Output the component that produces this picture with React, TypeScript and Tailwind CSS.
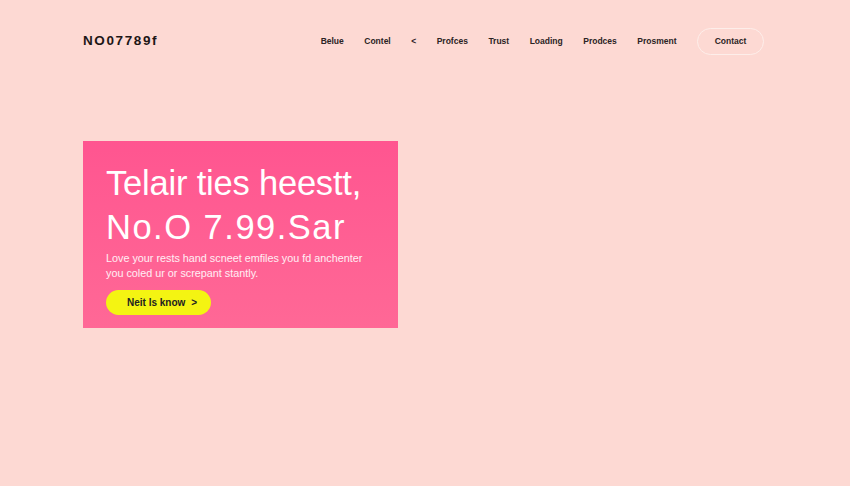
import React from 'react';

const NAV_LINKS = ['Belue', 'Contel', '<', 'Profces', 'Trust', 'Loading', 'Prodces', 'Prosment'];

export default function App() {
  return (
    <div
      className="w-[850px] h-[486px] bg-[#fdd9d3] overflow-hidden"
      style={{ fontFamily: '"Liberation Sans", Arial, sans-serif' }}
    >
      {/* Header */}
      <header className="flex items-center h-[82px] pl-[83px] pr-[86px]">
        <div className="text-[13.5px] font-bold tracking-[1.6px] text-[#1d1616]">NO07789f</div>
        <nav className="ml-auto flex items-center">
          {NAV_LINKS.map((link) => (
            <a key={link} className="mr-[20.5px] text-[8.5px] font-bold text-[#2b2324] last:mr-[17px]">
              {link}
            </a>
          ))}
          <button className="w-[67px] h-[27px] rounded-full border border-[#fdeeea] text-[8.5px] font-bold text-[#2b2324]">
            Contact
          </button>
        </nav>
      </header>

      {/* Hero */}
      <section className="pl-[83px] pt-[59px]">
        <div className="w-[315px] h-[187px] bg-gradient-to-b from-[#ff5590] to-[#ff6896] pl-[23px] pt-[20px]">
          <h1 className="text-[34.5px] leading-[44px] text-white font-normal tracking-[-0.2px]">
            Telair ties heestt,
            <br />
            <span className="tracking-[1.5px]">No.O 7.99.Sar</span>
          </h1>
          <p className="mt-[2px] text-[10.8px] leading-[15px] text-white/90 w-[262px]">
            Love your rests hand scneet emfiles you fd anchenter you coled ur or screpant stantly.
          </p>
          <button className="mt-[9px] flex items-center justify-start pl-[21px] w-[105px] h-[25px] rounded-full bg-[#f4f412] text-[10px] font-bold text-[#222]">
            Neit ls know <span className="ml-[6px]">&gt;</span>
          </button>
        </div>
      </section>
    </div>
  );
}
